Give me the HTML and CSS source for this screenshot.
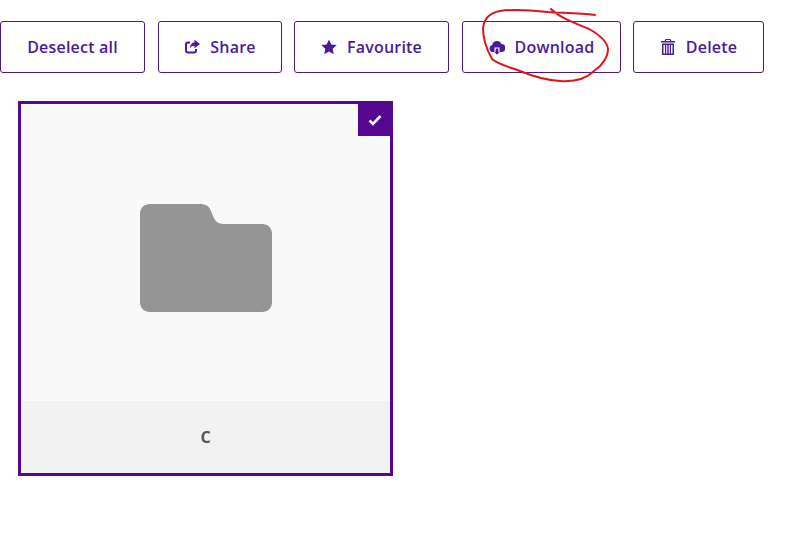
FILE: index.html
```html
<!DOCTYPE html>
<html lang="en">
<head>
  <meta charset="UTF-8">
  <title>Files</title>
  <link rel="stylesheet" href="styles.css">
</head>
<body>
  <div class="toolbar">
    <button class="btn btn-deselect">Deselect all</button>
    <button class="btn btn-share">
      <svg class="icon" viewBox="0 0 16 16"><path d="M6 2.5H4A3 3 0 0 0 1 5.5v6a3 3 0 0 0 3 3h6a3 3 0 0 0 3-3v-1.5h-2v1.5a1 1 0 0 1-1 1H4a1 1 0 0 1-1-1v-6a1 1 0 0 1 1-1h2z"/><path d="M10.5 0.8 16 5l-5.5 4.2V6.8C8.500 6.800 7 7.500 6 9.300 6 6 8 3.500 10.500 3.200z"/></svg>
      Share
    </button>
    <button class="btn btn-fav">
      <svg class="icon" viewBox="0 0 16 16"><path d="M8 .5l2.300 5 5.400.6-4 3.700 1.100 5.400L8 12.500l-4.800 2.700 1.100-5.400-4-3.700 5.400-.6z"/></svg>
      Favourite
    </button>
    <button class="btn btn-download">
      <svg class="icon" viewBox="0 0 16 16"><path d="M4 13a3.500 3.500 0 0 1-.8-6.900A4.800 4.800 0 0 1 12.400 5 4 4 0 0 1 12.500 13H10.500V8.500h-5V13z"/><path d="M6.700 9.500h2.600v3.300h1.500L8 15.800l-2.800-3h1.500z"/></svg>
      Download
    </button>
    <button class="btn btn-delete">
      <svg class="icon" viewBox="0 0 16 16"><path d="M5.500 0h5l1 2H15v1.500H1V2h3.500zM6.200 1l-.4 1h4.400l-.4-1z"/><path d="M2 4.500h12V16H2zM3.500 6v8.500h1.500V6zM6.200 6v8.500h1.100V6zM8.700 6v8.500h1.100V6zM11 6v8.500h1.500V6z" fill-rule="evenodd"/></svg>
      Delete
    </button>
  </div>

  <div class="card">
    <div class="card-check">
      <svg viewBox="0 0 14 12"><path d="M1.500 6.500 5 10l7.500-8" fill="none" stroke="#fff" stroke-width="2.600"/></svg>
    </div>
    <div class="card-thumb">
      <svg class="folder" viewBox="0 0 132 108"><path d="M10 0h50c6 0 9 2 11 7l2 5c2 5 5 8 11 8h38c6 0 10 4 10 10v68c0 6-4 10-10 10H10c-6 0-10-4-10-10V10C0 4 4 0 10 0z"/></svg>
    </div>
    <div class="card-name">C</div>
  </div>

  <svg class="scribble" viewBox="0 0 801 542"><path d="M595 15C578 13 562 13 548 12 530 10 512 9 500 11 489 13 484 19 483 28 483 40 487 50 492 59 499 65 510 67 520 71 532 76 545 80 560 81 575 82 587 78 594 71 602 66 608 57 608 49 607 40 598 34 589 29 575 23 560 18 551 9" fill="none" stroke="#e0141c" stroke-width="2" stroke-linecap="round" stroke-linejoin="round"/></svg>
</body>
</html>
```
FILE: styles.css
```css
*{
  margin: 0;
  padding: 0;
  box-sizing: border-box;
}
html{
  background-color: #fff;
}
body{
  position: relative;
  min-height: 542px;
  font-family: "Open Sans", "Noto Sans", sans-serif;
  overflow: hidden;
}
.toolbar{
  display: flex;
  padding-top: 21px;
}
.btn{
  height: 52px;
  display: flex;
  align-items: center;
  justify-content: center;
  gap: 10px;
  border: 1px solid #4b1a80;
  border-radius: 3px;
  background-color: #fff;
  color: #4a1a9c;
  font-family: inherit;
  font-size: 16px;
  font-weight: 600;
  letter-spacing: .2px;
}
.btn-deselect{
  width: 145px;
  margin-right: 13px;
}
.btn-share{
  width: 124px;
  margin-right: 12px;
}
.btn-fav{
  width: 155px;
  margin-right: 13px;
}
.btn-download{
  width: 159px;
  margin-right: 12px;
}
.btn-delete{
  width: 131px;
}
.icon{
  width: 16px;
  height: 16px;
  fill: currentColor;
  flex: none;
}
.card{
  position: relative;
  width: 375px;
  height: 375px;
  margin: 28px 0 0 18px;
  border: 3px solid #56068f;
  display: flex;
  flex-direction: column;
}
.card-check{
  position: absolute;
  top: -1px;
  right: -1px;
  width: 33px;
  height: 33px;
  background-color: #56068f;
  display: flex;
  align-items: center;
  justify-content: center;
}
.card-check svg{
  width: 14px;
  height: 12px;
}
.card-thumb{
  flex: 1;
  background-color: #f9f9f9;
  display: flex;
  align-items: center;
  justify-content: center;
}
.folder{
  width: 132px;
  height: 108px;
  fill: #959595;
  margin-top: 10px;
}
.card-name{
  height: 72px;
  background-color: #f2f2f2;
  color: #555;
  font-size: 16px;
  font-weight: 700;
  display: flex;
  align-items: center;
  justify-content: center;
}
.scribble{
  position: absolute;
  top: 0;
  left: 0;
  width: 801px;
  height: 542px;
  pointer-events: none;
}
```
